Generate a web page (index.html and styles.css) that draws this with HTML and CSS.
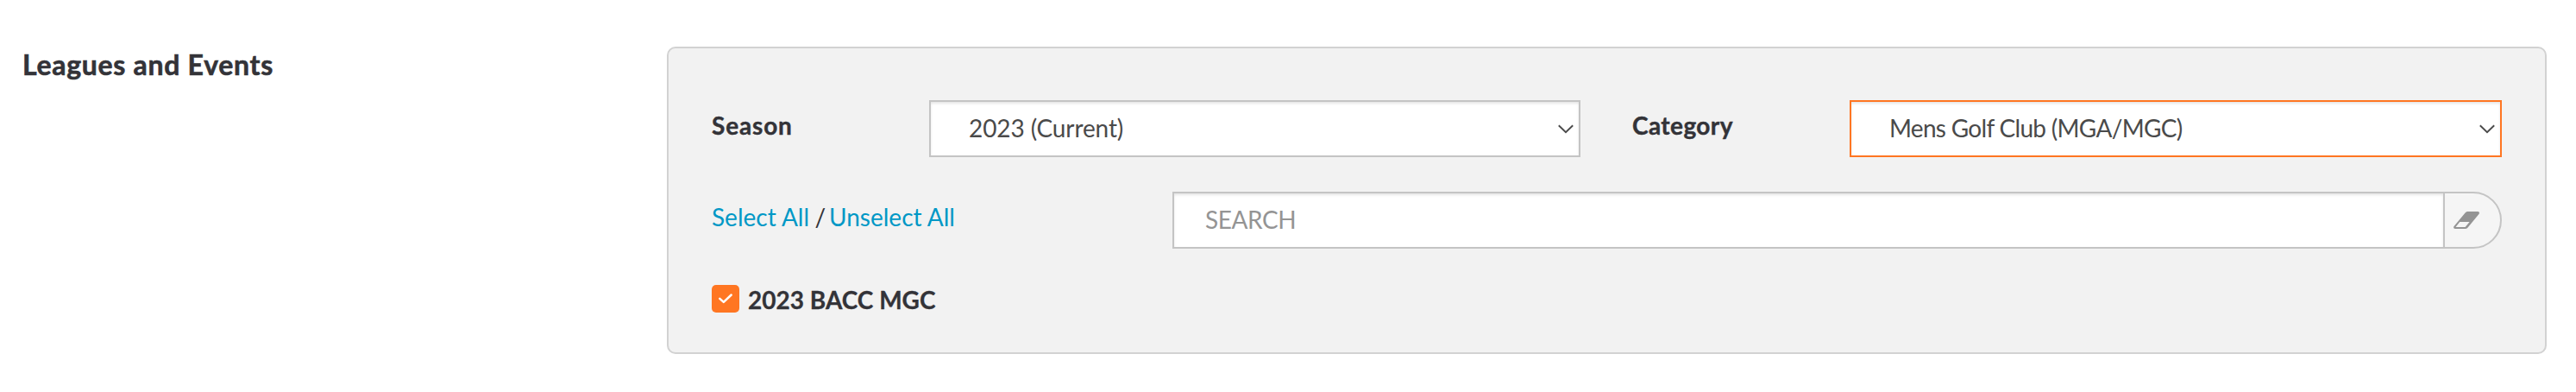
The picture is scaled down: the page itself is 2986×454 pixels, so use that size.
FILE: index.html
```
<!DOCTYPE html>
<html lang="en">
<head>
<meta charset="utf-8">
<title>Leagues and Events</title>
<link rel="stylesheet" href="styles.css">
</head>
<body>
<section class="section">
  <h2 class="section-title">Leagues and Events</h2>
  <div class="panel">
    <div class="filters">
      <label class="label label-season">Season</label>
      <div class="select">
        <span class="select-value value-season">2023 (Current)</span>
        <svg class="chevron" viewBox="0 0 18 11" width="18" height="11"><path d="M0.8 1.2 9 9.2 17.2 1.2" fill="none" stroke="#4a4a4a" stroke-width="1.9"/></svg>
      </div>
      <label class="label label-category">Category</label>
      <div class="select select-active">
        <span class="select-value value-category">Mens Golf Club (MGA/MGC)</span>
        <svg class="chevron" viewBox="0 0 18 11" width="18" height="11"><path d="M0.8 1.2 9 9.2 17.2 1.2" fill="none" stroke="#4a4a4a" stroke-width="1.9"/></svg>
      </div>
    </div>
    <div class="tools">
      <div class="bulk"><a class="link">Select All</a><span class="slash">/</span><a class="link">Unselect All</a></div>
      <div class="search">
        <div class="search-field">SEARCH</div>
        <div class="search-clear">
          <svg viewBox="0 0 30 20" width="30" height="20"><path fill="#949494" fill-rule="evenodd" d="M16.5 0H28.3Q30.8 0.4 29.6 2.8L16.4 18.8Q15.2 20 13.5 20H1.8Q-0.6 19.5 0.4 17.2L13.8 1.3Q15 0 16.5 0ZM7.3 12 2.5 17.9H13.6L18.6 12Z"/></svg>
        </div>
      </div>
    </div>
    <div class="option">
      <span class="checkbox"><svg viewBox="0 0 32 32" width="32" height="32"><path d="M9.3 15.9 13.8 19.9 22.7 11.5" fill="none" stroke="#fff" stroke-width="2.5" stroke-linecap="round" stroke-linejoin="round"/></svg></span>
      <span class="option-label">2023 BACC MGC</span>
    </div>
  </div>
</section>
</body>
</html>
```
FILE: styles.css
```
* { box-sizing: border-box; }
body {
  margin: 0;
  background: #fff;
  color: #333338;
  font: 28px/40px Lato, "Open Sans", sans-serif;
}
.section {
  display: flex;
  align-items: flex-start;
  padding: 54px 34px 44px 26px;
}
.section-title {
  flex: 1;
  margin: 0;
  padding-top: 1px;
  font-size: 32px;
  font-weight: 700;
  line-height: 40px;
  letter-spacing: 0.7px;
  -webkit-text-stroke: 0.6px currentColor;
}
.panel {
  width: 2179px;
  height: 356px;
  padding: 60px 50px;
  border: 2px solid #d2d2d2;
  border-radius: 10px;
  background: #f2f2f2;
}
.filters {
  display: grid;
  grid-template-columns: 252px 755px 60px 252px 756px;
}
.label {
  padding-top: 9px;
  font-weight: 700;
  -webkit-text-stroke: 0.4px currentColor;
}
.label-season { letter-spacing: 0.85px; }
.label-category {
  grid-column: 4;
  letter-spacing: 0.4px;
}
.select {
  display: flex;
  align-items: center;
  justify-content: space-between;
  height: 66px;
  padding: 0 6px 0 44px;
  border: 2px solid #c4c4c4;
  background: #fff;
  box-shadow: inset 0 2px 3px rgba(0, 0, 0, 0.1);
  color: #4a4a4a;
}
.select-active { border-color: #ff7622; }
.select-value { padding-bottom: 2px; }
.value-season { letter-spacing: -0.1px; }
.value-category { letter-spacing: -0.7px; }
.tools {
  display: flex;
  justify-content: space-between;
  margin-top: 40px;
}
.bulk {
  display: flex;
  gap: 6.5px;
  padding-top: 9px;
}
.link { color: #0098c6; }
.slash { width: 10px; text-align: center; }
.search {
  display: flex;
  width: 1541px;
  height: 66px;
  border: 2px solid #c4c4c4;
  border-radius: 0 33px 33px 0;
  background: #f5f5f5;
  overflow: hidden;
}
.search-field {
  width: 1473px;
  padding: 10px 36px;
  border-right: 2px solid #c4c4c4;
  background: #fff;
  box-shadow: inset 0 2px 3px rgba(0, 0, 0, 0.1);
  color: #949494;
  letter-spacing: -0.4px;
}
.search-clear {
  display: flex;
  align-items: center;
  padding-left: 10px;
}
.option {
  display: flex;
  align-items: center;
  gap: 10px;
  height: 32px;
  margin-top: 42px;
}
.checkbox {
  display: flex;
  width: 32px;
  height: 32px;
  border-radius: 5px;
  background: #ff7622;
}
.option-label {
  padding-top: 2px;
  font-weight: 700;
  -webkit-text-stroke: 0.3px currentColor;
}
```
